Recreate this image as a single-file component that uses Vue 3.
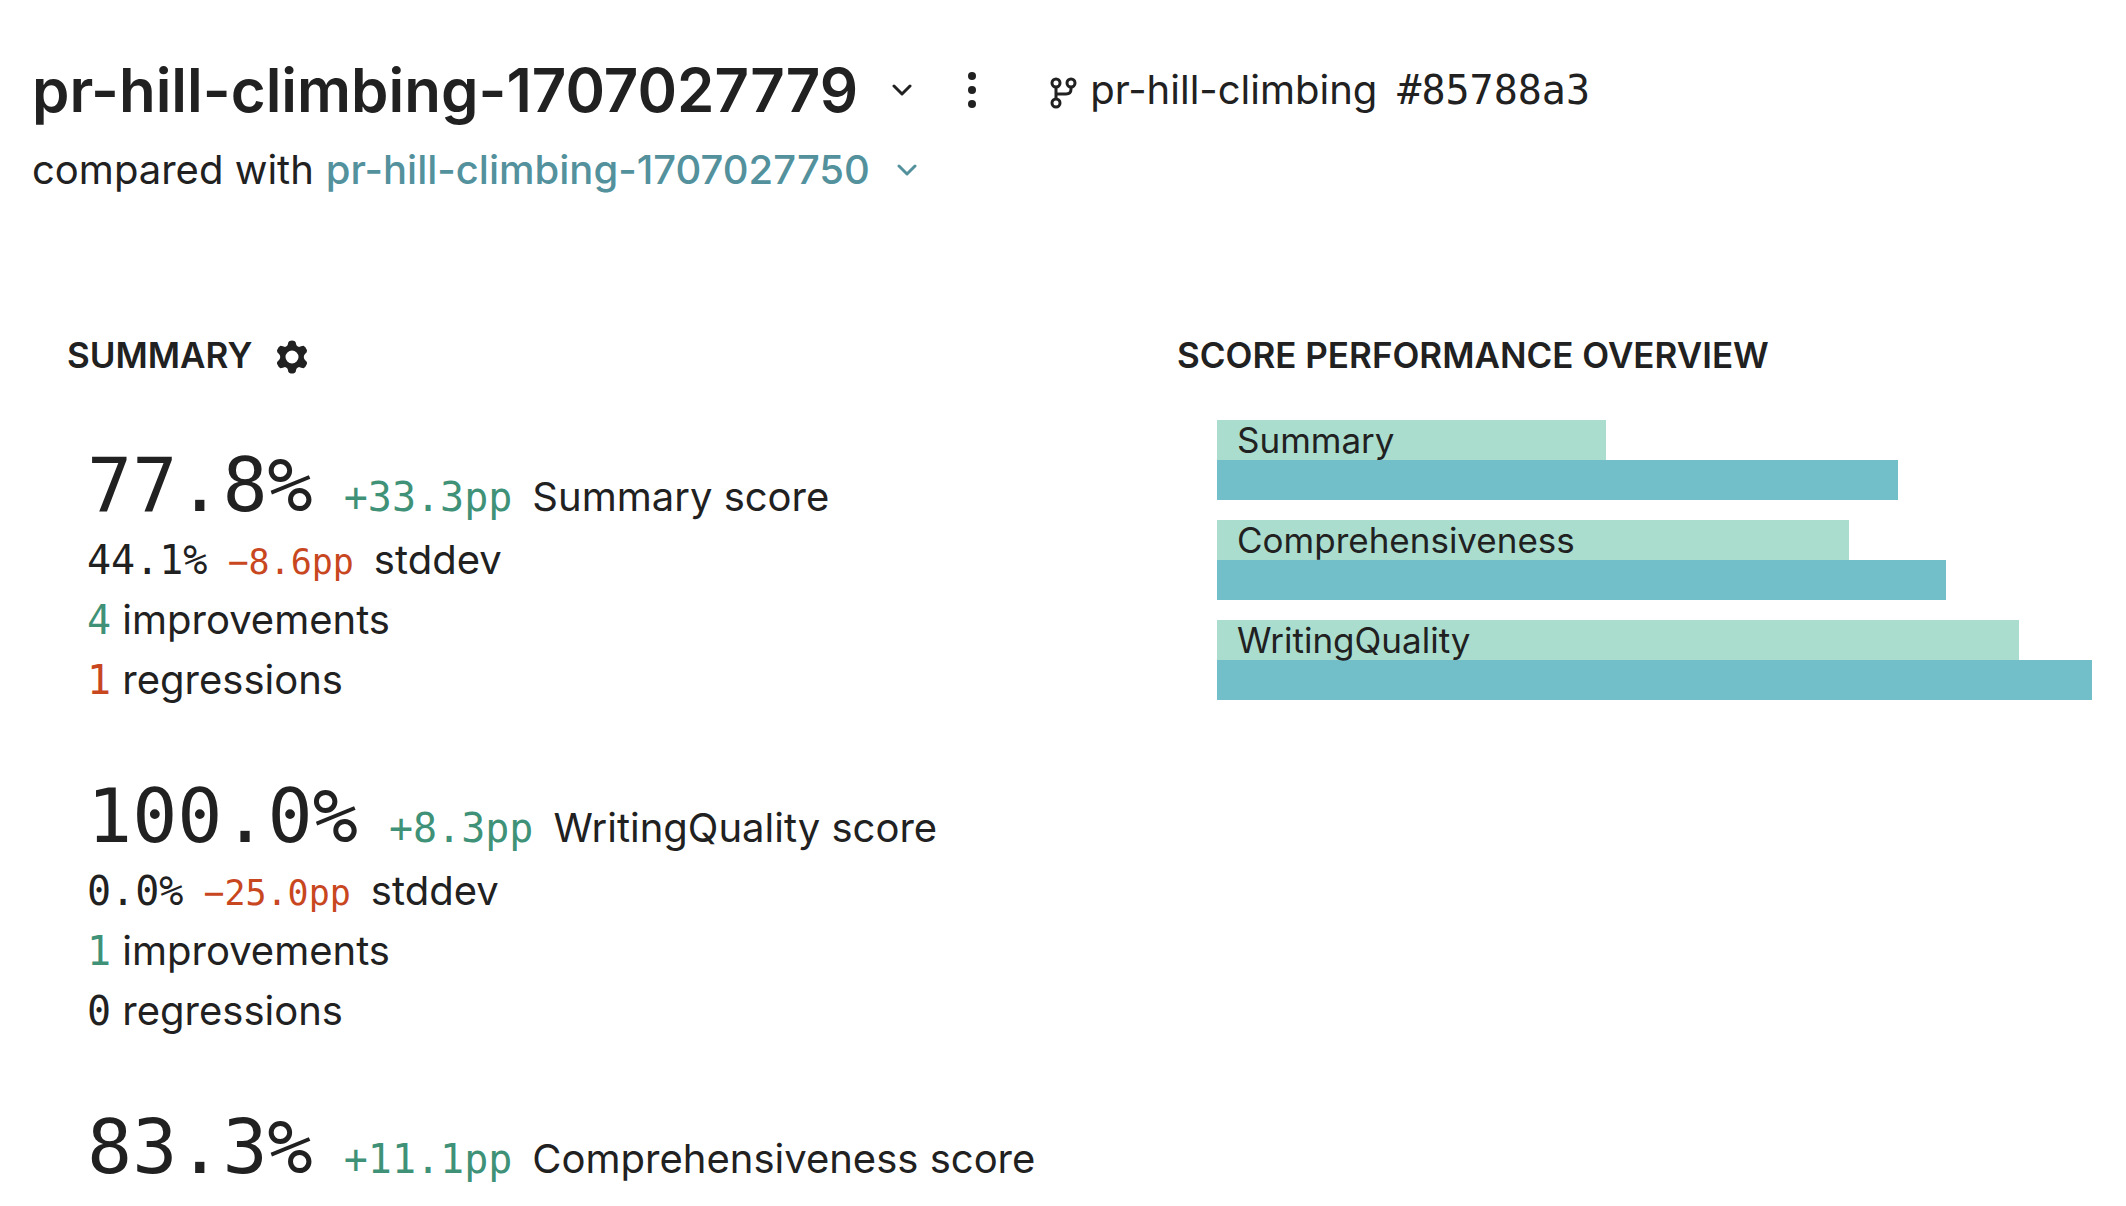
<script setup>
const metrics = [
  {
    name: 'Summary', score: '77.8%', change: '+33.3pp',
    details: { stddev: '44.1%', change: '−8.6pp', improvements: 4, regressions: 1 },
  },
  {
    name: 'WritingQuality', score: '100.0%', change: '+8.3pp',
    details: { stddev: '0.0%', change: '−25.0pp', improvements: 1, regressions: 0 },
  },
  { name: 'Comprehensiveness', score: '83.3%', change: '+11.1pp' },
]

const bars = [
  { name: 'Summary', before: 44.5, after: 77.8 },
  { name: 'Comprehensiveness', before: 72.2, after: 83.3 },
  { name: 'WritingQuality', before: 91.7, after: 100 },
]
</script>

<template>
  <div class="page">
    <header class="header">
      <div class="title-row">
        <h1 class="title">pr-hill-climbing-1707027779</h1>
        <button class="icon-button toggle" type="button" aria-label="Switch experiment">
          <svg width="20" height="12" viewBox="0 0 20 12" class="chevron"><path d="M2 2l8 8 8-8" /></svg>
        </button>
        <button class="icon-button more" type="button" aria-label="More actions">
          <svg width="8" height="36" viewBox="0 0 8 36" fill="currentColor">
            <circle cx="4" cy="4" r="4" /><circle cx="4" cy="18" r="4" /><circle cx="4" cy="32" r="4" />
          </svg>
        </button>
        <div class="branch">
          <svg class="branch-icon" width="28" height="32" viewBox="0 0 28 32">
            <circle cx="6" cy="6" r="4" /><circle cx="21" cy="6" r="4" /><circle cx="6" cy="26" r="4" />
            <path d="M6 10v12M6 17h10q5 0 5-5v-2" />
          </svg>
          <span>pr-hill-climbing</span>
          <span class="mono commit">#85788a3</span>
        </div>
      </div>
      <div class="compare-row">
        <span>compared with</span>
        <a class="compare-link" href="#">pr-hill-climbing-1707027750</a>
        <button class="icon-button link-toggle" type="button" aria-label="Switch comparison">
          <svg width="20" height="12" viewBox="0 0 20 12" class="chevron"><path d="M2 2l8 8 8-8" /></svg>
        </button>
      </div>
    </header>

    <main class="columns">
      <section>
        <div class="heading-row">
          <h2 class="heading">SUMMARY</h2>
          <button class="icon-button settings" type="button" aria-label="Summary settings">
            <svg width="32" height="34" viewBox="0 0 32 34" fill="currentColor">
              <path fill-rule="evenodd" d="M13.5 1Q16 0 18.500 1Q20 1.800 20.200 4.500Q20.600 6 22 6.500L23 7Q25 6 27.500 5.800Q29.500 6.500 31 10.300Q31.500 12.200 28.800 14.300Q27.800 15.500 27.800 17Q27.800 18.500 28.800 19.700Q31.500 21.800 31 23.700Q29.500 27.500 27.500 28.200Q25 28 23 27L22 27.500Q20.600 28 20.200 29.500Q20 32.200 18.500 33Q16 34 13.500 33Q12 32.200 11.800 29.500Q11.400 28 10 27.500L9 27Q7 28 4.500 28.200Q2.500 27.500 1 23.700Q.5 21.800 3.200 19.700Q4.200 18.500 4.200 17Q4.200 15.500 3.200 14.300Q.5 12.200 1 10.300Q2.500 6.500 4.500 5.800Q7 6 9 7L10 6.500Q11.400 6 11.800 4.500Q12 1.800 13.500 1ZM16 10.500a6.500 6.500 0 1 0 0 13a6.500 6.500 0 1 0 0-13Z" />
            </svg>
          </button>
        </div>
        <div class="metrics">
          <article v-for="m in metrics" :key="m.name" class="metric">
            <div class="score-row">
              <span class="mono score">{{ m.score }}</span>
              <span class="mono up">{{ m.change }}</span>
              <span>{{ m.name }} score</span>
            </div>
            <template v-if="m.details">
              <div class="stddev-row">
                <span class="mono">{{ m.details.stddev }}</span>
                <span class="mono small down">{{ m.details.change }}</span>
                <span>stddev</span>
              </div>
              <div><span class="mono" :class="{ up: m.details.improvements }">{{ m.details.improvements }}</span> improvements</div>
              <div><span class="mono" :class="{ down: m.details.regressions }">{{ m.details.regressions }}</span> regressions</div>
            </template>
          </article>
        </div>
      </section>

      <section>
        <div class="heading-row">
          <h2 class="heading">SCORE PERFORMANCE OVERVIEW</h2>
        </div>
        <div class="chart">
          <div v-for="b in bars" :key="b.name">
            <div class="bar before" :style="{ width: b.before + '%' }">{{ b.name }}</div>
            <div class="bar after" :style="{ width: b.after + '%' }"></div>
          </div>
        </div>
      </section>
    </main>
  </div>
</template>

<style>
body {
  margin: 0;
  background: #fff;
}
</style>

<style scoped>
.page {
  font-family: Inter, "Liberation Sans", sans-serif;
  font-size: 40px;
  line-height: 60px;
  color: #212121;
}
.mono {
  font-family: "DejaVu Sans Mono", "Liberation Mono", monospace;
}
.header {
  padding: 50px 32px 0;
}
.title-row,
.compare-row,
.branch,
.heading-row {
  display: flex;
  align-items: center;
  white-space: nowrap;
}
.title-row {
  height: 80px;
}
.title {
  margin: 0;
  font-size: 60px;
  font-weight: 600;
  line-height: 80px;
}
.icon-button {
  display: flex;
  padding: 0;
  border: 0;
  background: none;
  color: inherit;
  cursor: pointer;
}
.chevron {
  fill: none;
  stroke: currentColor;
  stroke-width: 3;
  stroke-linecap: round;
  stroke-linejoin: round;
}
.toggle {
  margin-left: 34px;
}
.more {
  margin-left: 56px;
}
.branch {
  margin-left: 74px;
}
.branch-icon {
  margin: 6px 12px 0 0;
  fill: none;
  stroke: currentColor;
  stroke-width: 3;
}
.commit {
  margin-left: 20px;
}
.compare-row {
  margin-top: 10px;
  gap: 12px;
}
.compare-link {
  color: #53919d;
  font-weight: 500;
  text-decoration: none;
}
.link-toggle {
  margin-left: 15px;
  color: #53919d;
}
.columns {
  display: grid;
  grid-template-columns: 1110fr 915fr;
  padding: 130px 34px 0 67px;
}
.heading-row {
  height: 50px;
  gap: 24px;
}
.heading {
  margin: 0;
  font-size: 35px;
  font-weight: 600;
  line-height: 50px;
}
.settings {
  margin-top: 4px;
}
.metrics {
  display: flex;
  flex-direction: column;
  gap: 61px;
  padding: 60px 0 0 20px;
}
.metric {
  white-space: nowrap;
}
.score-row {
  display: flex;
  align-items: baseline;
  height: 90px;
  line-height: 90px;
}
.score {
  margin-right: 31px;
  font-size: 75px;
}
.score-row .up,
.stddev-row .mono {
  margin-right: 20px;
}
.stddev-row {
  display: flex;
  align-items: baseline;
  height: 60px;
}
.small {
  font-size: 35px;
}
.up {
  color: #3f9277;
}
.down {
  color: #c8471f;
}
.chart {
  display: flex;
  flex-direction: column;
  gap: 20px;
  padding: 40px 0 0 40px;
}
.bar {
  box-sizing: border-box;
  height: 40px;
  padding-left: 20px;
  font-size: 35px;
  line-height: 40px;
  white-space: nowrap;
}
.before {
  position: relative;
  z-index: 1;
  background: #aaddce;
}
.after {
  background: #72bfca;
}
</style>
